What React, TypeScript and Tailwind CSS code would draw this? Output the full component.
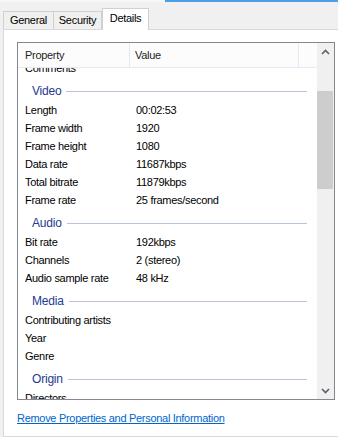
import React from 'react';

type Row =
  | { kind: 'group'; label: string }
  | { kind: 'item'; label: string; value?: string };

const rows: Row[] = [
  { kind: 'item', label: 'Comments' },
  { kind: 'group', label: 'Video' },
  { kind: 'item', label: 'Length', value: '00:02:53' },
  { kind: 'item', label: 'Frame width', value: '1920' },
  { kind: 'item', label: 'Frame height', value: '1080' },
  { kind: 'item', label: 'Data rate', value: '11687kbps' },
  { kind: 'item', label: 'Total bitrate', value: '11879kbps' },
  { kind: 'item', label: 'Frame rate', value: '25 frames/second' },
  { kind: 'group', label: 'Audio' },
  { kind: 'item', label: 'Bit rate', value: '192kbps' },
  { kind: 'item', label: 'Channels', value: '2 (stereo)' },
  { kind: 'item', label: 'Audio sample rate', value: '48 kHz' },
  { kind: 'group', label: 'Media' },
  { kind: 'item', label: 'Contributing artists' },
  { kind: 'item', label: 'Year' },
  { kind: 'item', label: 'Genre' },
  { kind: 'group', label: 'Origin' },
  { kind: 'item', label: 'Directors' },
];

function Chevron({ down }: { down?: boolean }) {
  return (
    <svg width="9" height="6" viewBox="0 0 9 6" className={down ? 'rotate-180' : ''}>
      <path d="M1 5 L4.5 1.5 L8 5" fill="none" stroke="#606060" strokeWidth="1.6" />
    </svg>
  );
}

export default function App() {
  return (
    <div
      className="flex h-[437px] w-[338px] flex-col overflow-hidden bg-[#f0f0f0] text-[11px] tracking-[-0.3px] text-black"
      style={{ fontFamily: '"Liberation Sans", Arial, sans-serif' }}
    >
      {/* Window accent */}
      <div className="flex h-[2px]">
        <div className="flex-1 bg-[#f7f7f7]" />
        <div className="w-[173px] bg-[#4a9fe6]" />
      </div>

      {/* Tabs */}
      <div className="flex h-[27px] items-end pl-[3px]">
        <div className="flex h-[18px] w-[51px] items-center justify-center border border-b-0 border-[#d0d0d0] bg-[#f0f0f0]">
          General
        </div>
        <div className="flex h-[18px] w-[48px] items-center justify-center border border-b-0 border-l-0 border-[#d0d0d0] bg-[#f0f0f0]">
          Security
        </div>
        <div className="relative z-10 -mb-px flex h-[22px] w-[47px] items-center justify-center border border-b-0 border-[#d0d0d0] bg-white pb-[2px]">
          Details
        </div>
      </div>

      {/* Panel */}
      <div className="ml-[3px] flex flex-1 flex-col border border-r-0 border-[#d9d9d9] bg-white pl-[13px] pt-[12px]">
        <div className="flex h-[358px] w-[318px] border border-[#828790]">
          <div className="flex min-w-0 flex-1 flex-col">
            {/* Column header */}
            <div className="flex h-[25px] shrink-0 border-b border-[#e5ebf4] bg-[#fcfcfd] text-[#1e1e1e]">
              <div className="flex w-[112px] items-center border-r border-[#e3e9f4] pl-[7px]">Property</div>
              <div className="flex w-[169px] items-center border-r border-[#e3e9f4] pl-[5px]">Value</div>
              <div className="flex-1" />
            </div>

            {/* Rows */}
            <div className="flex-1 overflow-hidden">
              <div className="-mt-[9px] flex flex-col">
                {rows.map((row, i) =>
                  row.kind === 'group' ? (
                    <div key={i} className="flex h-[24px] items-center pl-[14px] pr-[10px] pt-[4px]">
                      <span className="text-[12px] tracking-[-0.2px] text-[#1e3991]">{row.label}</span>
                      <div className="ml-[5px] h-px flex-1 bg-[#b9c4da]" />
                    </div>
                  ) : (
                    <div key={i} className="flex h-[18px] items-center">
                      <div className="w-[113px] shrink-0 pl-[7px]">{row.label}</div>
                      <div className="pl-[5px]">{row.value}</div>
                    </div>
                  ),
                )}
              </div>
            </div>
          </div>

          {/* Scrollbar */}
          <div className="flex w-[17px] shrink-0 flex-col bg-[#f0f0f0]">
            <div className="flex h-[17px] items-center justify-center">
              <Chevron />
            </div>
            <div className="h-[31px]" />
            <div className="mr-px h-[98px] bg-[#cdcdcd]" />
            <div className="flex-1" />
            <div className="flex h-[17px] items-center justify-center">
              <Chevron down />
            </div>
          </div>
        </div>

        <div className="mt-[10px]">
          <a href="#" className="text-[#0066cc] underline">
            Remove Properties and Personal Information
          </a>
        </div>
      </div>
    </div>
  );
}
